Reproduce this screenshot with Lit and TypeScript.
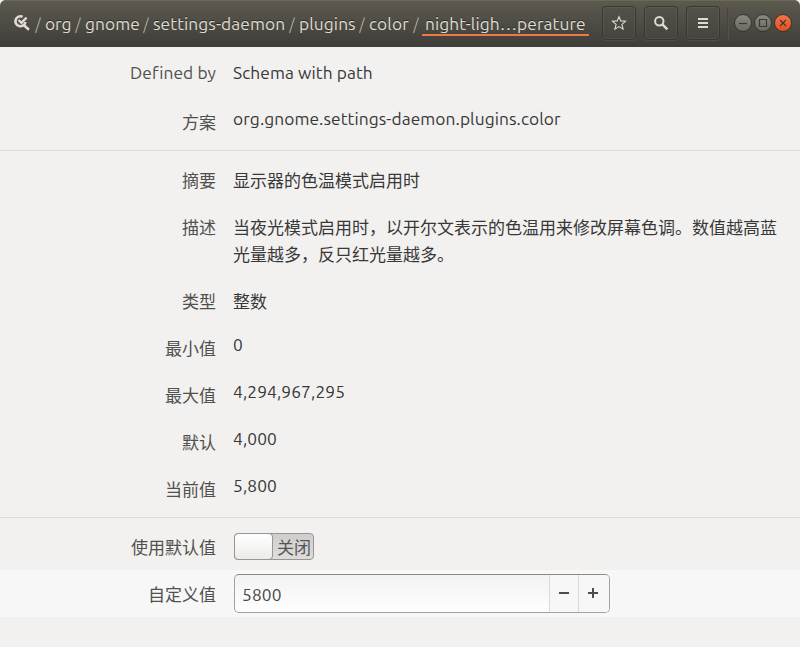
import { LitElement, html, css, svg } from "lit";
import { customElement, property, state } from "lit/decorators.js";
import { classMap } from "lit/directives/class-map.js";

const crumbs = [
  { id: "org", text: "org" },
  { id: "gnome", text: "gnome" },
  { id: "daemon", text: "settings-daemon" },
  { id: "plugins", text: "plugins" },
  { id: "color", text: "color" },
  { id: "key", text: "night-ligh…perature" },
];

@customElement("path-bar")
class PathBar extends LitElement {
  static styles = css`
    :host { display: flex; align-items: center; height: 47px; }
    .root { display: block; width: 18px; height: 18px; margin: 0 3px 2px 0; flex: none; }
    .slash { display: block; width: 8px; height: 18px; flex: none; margin-top: 2px; }
    .crumb {
      height: 24px; line-height: 24px; margin: 0 2px 0 3px; flex: none;
      white-space: nowrap; color: #dfdbd2; text-shadow: 0 -1px rgba(0,0,0,.45);
    }
    .org { width: 27px; letter-spacing: -0.1px; }
    .gnome { width: 55px; }
    .daemon { width: 133px; }
    .plugins { width: 57px; }
    .color { width: 41px; }
    .key { height: 22px; width: 164px; margin-left: 2px; padding-left: 3px; border-bottom: 2px solid #f07746; }
  `;
  render() {
    return html`
      <svg class="root" viewBox="0 0 18 18">
        <path d="M9.6 2.7A5 5 0 1 0 12.4 8M10.4 10.8l5.6 5" fill="none" stroke="#dfdbd2" stroke-width="2.6"/>
        <path d="M5.6 6l2.8 2.9 5.2-5.2" fill="none" stroke="#dfdbd2" stroke-width="2.4"/>
      </svg>
      ${crumbs.map((c) => html`
        <svg class="slash" viewBox="0 0 8 18"><path d="M1.5 17L6.5 1.5" stroke="#a19e94" stroke-width="1.2"/></svg>
        <span class="crumb ${c.id}">${c.text}</span>`)}
    `;
  }
}

const glyphs: Record<string, unknown> = {
  star: svg`<path d="M8 1.7l1.8 4.2 4.7.4-3.6 3.1 1.2 4.7L8 11.6l-4.1 2.5 1.2-4.7-3.6-3.1 4.7-.4z" fill="none" stroke="#dfdbd2" stroke-width="1.1"/>`,
  search: svg`<circle cx="6.3" cy="6.3" r="4.2" fill="none" stroke="#dfdbd2" stroke-width="2"/><path d="M9.4 9.4l5 5" stroke="#dfdbd2" stroke-width="2.5"/>`,
  menu: svg`<path d="M3 4h10M3 8h10M3 12h10" stroke="#dfdbd2" stroke-width="2"/>`,
};

const windowButtons = [
  { id: "minimize", d: "M6 10.5h8", top: "#8b8980", bottom: "#6a6861" },
  { id: "maximize", d: "M6.5 6.5h7v7h-7z", top: "#8b8980", bottom: "#6a6861" },
  { id: "close", d: "M7 7l6 6M13 7l-6 6", top: "#f4764c", bottom: "#e2501f" },
];

@customElement("header-bar")
class HeaderBar extends LitElement {
  static styles = css`
    :host {
      display: flex; align-items: center; box-sizing: border-box; height: 47px; padding-left: 13px;
      border-radius: 6px 6px 0 0; box-shadow: inset 0 1px #6b6859;
      background: linear-gradient(#5d5a4e, #3e3d39);
    }
    path-bar { width: 576px; flex: none; }
    .tool {
      box-sizing: border-box; width: 34px; height: 34px; margin: 0 8px 1px 0; flex: none;
      border: 1px solid #383732; border-radius: 4px; display: grid; place-items: center;
      background: linear-gradient(#535148, #45443e);
      box-shadow: inset 0 0 0 1px rgba(255,255,255,.06), 0 1px rgba(255,255,255,.07);
    }
    .tool svg { width: 16px; height: 16px; }
    .lead { margin-left: 13px; }
    .split { width: 1px; height: 34px; background: #45443e; border-right: 1px solid #53514a; margin: 0 4px 0 -1px; }
    .win { width: 20px; height: 20px; flex: none; margin-bottom: 1px; }
  `;
  render() {
    return html`
      <path-bar></path-bar>
      ${["star", "search", "menu"].map((n, i) => html`
        <div class=${classMap({ tool: true, lead: i === 0 })}><svg viewBox="0 0 16 16">${glyphs[n]}</svg></div>`)}
      <div class="split"></div>
      ${windowButtons.map((b) => html`
        <svg class="win" viewBox="0 0 20 20">
          <defs><linearGradient id=${b.id} x2="0" y2="1">
            <stop stop-color=${b.top}></stop><stop offset="1" stop-color=${b.bottom}></stop>
          </linearGradient></defs>
          <circle cx="10" cy="10" r="8.5" fill="url(#${b.id})" stroke="#35342f"/>
          <path d=${b.d} fill="none" stroke="#3a3934" stroke-width="1.2"/>
        </svg>`)}
    `;
  }
}

@customElement("key-row")
class KeyRow extends LitElement {
  @property() label = "";
  @property({ type: Boolean }) latin = false;
  static styles = css`
    :host { display: flex; gap: 17px; box-sizing: border-box; min-height: 47px; padding: 10px 17px 10px 0; }
    .label { width: 216px; flex: none; text-align: right; line-height: 27px; color: #50504e; }
    .latin { line-height: 20px; }
    :host(.control) .label { padding-top: 1px; }
    .value { flex: 1; line-height: 27px; color: #383838; }
  `;
  render() {
    return html`<div class=${classMap({ label: true, latin: this.latin })}>${this.label}</div>
      <div class="value"><slot></slot></div>`;
  }
}

@customElement("app-root")
class AppRoot extends LitElement {
  @state() custom = "5800";
  static styles = css`
    :host {
      display: block; height: 647px; overflow: hidden; background: #f2f1f0;
      font: 17px/27px Ubuntu, "Noto Sans", "Noto Sans CJK SC", sans-serif;
    }
    header-bar, .en, .head { font-size: 17.33px; letter-spacing: .08px; }
    .en { display: block; line-height: 20px; white-space: nowrap; }
    .en.number { letter-spacing: .12px; }
    .first { min-height: 46px; }
    .group { padding: 6px 0 4px; border-bottom: 1px solid #dcdbda; }
    .group:last-child { border: 0; padding-top: 5px; }
    .control { padding-top: 10px; padding-bottom: 0; height: 47px; }
    .custom { background: #f7f7f7; }
    .switch {
      box-sizing: border-box; display: flex; width: 80px; height: 27px; margin-left: 1px;
      border: 1px solid #979694; border-radius: 4px; background: linear-gradient(#cfcecd, #dedddc);
      color: #555;
    }
    .knob { box-sizing: border-box; width: 39px; height: 27px; margin: -1px 0 0 -1px; border: 1px solid #979694; border-radius: 4px; background: linear-gradient(#fff, #ebebea); }
    .state { flex: 1; text-align: center; line-height: 27px; padding-left: 2px; }
    .spin {
      box-sizing: border-box; display: flex; width: 376px; height: 39px; margin: -6px 0 0 1px;
      border: 1px solid #a3a2a1; border-top-color: #8b8a89; border-radius: 5px;
      background: linear-gradient(#f2f2f2, #fff); overflow: hidden; color: #484848;
    }
    .num { flex: 1; padding-left: 7px; line-height: 40px; font-size: 17.33px; letter-spacing: .12px; }
    .step { width: 28px; border-left: 1px solid #d9d9d9; background: #f7f7f7; display: grid; place-items: center; padding-bottom: 1px; }
    .step svg { width: 12px; height: 12px; }
    .plus { width: 28px; padding-right: 2px; }
  `;
  render() {
    const en = (t: string) => html`<span class=${classMap({ en: true, number: /^[\d,]+$/.test(t) })}>${t}</span>`;
    return html`
      <header-bar></header-bar>
      <div class="group">
        <key-row class="first head" label="Defined by" latin>${en("Schema with path")}</key-row>
        <key-row label="方案">${en("org.gnome.settings-daemon.plugins.color")}</key-row>
      </div>
      <div class="group">
        <key-row label="摘要">显示器的色温模式启用时</key-row>
        <key-row label="描述">当夜光模式启用时，以开尔文表示的色温用来修改屏幕色调。数值越高蓝光量越多，反只红光量越多。</key-row>
        <key-row label="类型">整数</key-row>
        <key-row label="最小值">${en("0")}</key-row>
        <key-row label="最大值">${en("4,294,967,295")}</key-row>
        <key-row label="默认">${en("4,000")}</key-row>
        <key-row label="当前值">${en("5,800")}</key-row>
      </div>
      <div class="group">
        <key-row class="control" label="使用默认值"><div class="switch"><div class="knob"></div><div class="state">关闭</div></div></key-row>
        <key-row class="control custom" label="自定义值"><div class="spin"><div class="num">${this.custom}</div>
          <div class="step"><svg viewBox="0 0 12 12"><path d="M1 6h10" stroke="#4c4c4c" stroke-width="2"/></svg></div>
          <div class="step plus"><svg viewBox="0 0 12 12"><path d="M1 6h10M6 1v10" stroke="#4c4c4c" stroke-width="2"/></svg></div></div></key-row>
      </div>
    `;
  }
}
